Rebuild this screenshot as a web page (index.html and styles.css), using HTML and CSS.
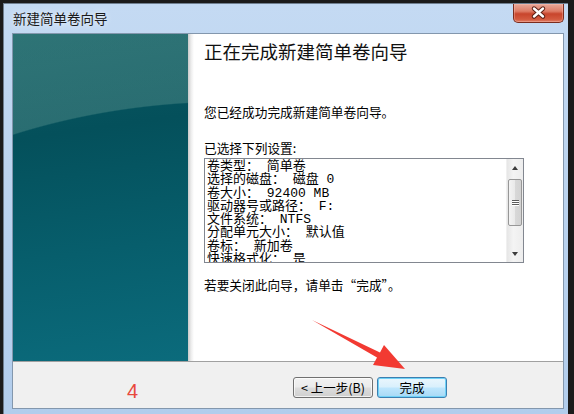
FILE: index.html
```html
<!DOCTYPE html>
<html lang="zh-CN">
<head>
    <meta charset="UTF-8">
    <title>新建简单卷向导</title>
    <link rel="stylesheet" href="styles.css">
</head>
<body>
    <div class="screen">
        <div class="window">
            <!-- Title bar -->
            <div class="titlebar">
                <span class="title">新建简单卷向导</span>
                <div class="close-btn">
                    <svg width="51" height="19" viewBox="0 0 51 19">
                        <path d="M21 5.5 L30 13.5 M30 5.5 L21 13.5" stroke="#5a1f14" stroke-width="4.4" stroke-linecap="round"/>
                        <path d="M21 5.5 L30 13.5 M30 5.5 L21 13.5" stroke="#ffffff" stroke-width="2.4" stroke-linecap="round"/>
                    </svg>
                </div>
            </div>

            <!-- Client area -->
            <div class="client">
                <div class="main">
                    <div class="banner"></div>
                    <div class="page">
                        <h1 class="headline">正在完成新建简单卷向导</h1>
                        <p class="intro">您已经成功完成新建简单卷向导。</p>
                        <p class="label">已选择下列设置:</p>

                        <div class="listbox">
                            <div class="list-text">
                                <div>卷类型： 简单卷</div>
                                <div>选择的磁盘： 磁盘 0</div>
                                <div>卷大小： 92400 MB</div>
                                <div>驱动器号或路径： F:</div>
                                <div>文件系统： NTFS</div>
                                <div>分配单元大小： 默认值</div>
                                <div>卷标： 新加卷</div>
                                <div>快速格式化： 是</div>
                            </div>
                            <div class="scrollbar">
                                <div class="sb-btn"><span class="tri-up"></span></div>
                                <div class="sb-track">
                                    <div class="sb-thumb">
                                        <span class="grip"></span>
                                        <span class="grip"></span>
                                        <span class="grip"></span>
                                    </div>
                                </div>
                                <div class="sb-btn"><span class="tri-down"></span></div>
                            </div>
                        </div>

                        <p class="hint">若要关闭此向导，请单击“完成”。</p>
                    </div>
                </div>

                <!-- Footer buttons -->
                <div class="footer">
                    <span class="step">4</span>
                    <div class="buttons">
                        <button class="btn back">&lt; 上一步(B)</button>
                        <button class="btn finish">完成</button>
                    </div>
                </div>
            </div>
        </div>

        <!-- Red annotation arrow -->
        <svg class="annotation" width="574" height="414" viewBox="0 0 574 414">
            <polygon points="312,320 380,352.6 384,345 405,369 373,365 377,357.6" fill="#f23a32"/>
        </svg>
    </div>
</body>
</html>
```

FILE: styles.css
```css
* {
    margin: 0;
    padding: 0;
    box-sizing: border-box;
}

body {
    background: #1b1b1b;
    font-family: "Noto Sans CJK SC", "Liberation Sans", sans-serif;
    color: #000;
}

.screen {
    position: relative;
    width: 574px;
    height: 414px;
    overflow: hidden;
    padding: 3px 6px 0 3px;
    background: #1b1b1b;
}

/* Window frame */
.window {
    height: 411px;
    display: flex;
    flex-direction: column;
    padding: 0 4px 5px 8px;
    background: linear-gradient(to bottom, #c4daf3 0%, #bcd4ef 40%, #b2cdec 100%);
    border-left: 1px solid #6f7f90;
    border-top: 1px solid #6f7f90;
}

.titlebar {
    height: 29px;
    display: flex;
    justify-content: space-between;
    align-items: flex-start;
}

.title {
    margin-top: 5px;
    margin-left: 1px;
    font-size: 13.5px;
    line-height: 18px;
    color: #1a1a1a;
    text-shadow: 0 0 6px rgba(255, 255, 255, 0.9);
}

.close-btn {
    width: 51px;
    height: 19px;
    border: 1px solid #7a2c1e;
    border-top: none;
    border-radius: 0 0 5px 5px;
    background: linear-gradient(to bottom, #eaa898 0%, #de7c66 40%, #c8452c 55%, #d35a3f 85%, #e0816a 100%);
    box-shadow: inset 0 0 0 1px rgba(255, 200, 190, 0.35);
}

.close-btn svg {
    display: block;
    margin: -1px 0 0 -1px;
}

/* Client area */
.client {
    flex: 1;
    display: flex;
    flex-direction: column;
    border: 1px solid #8397ad;
    background: #f0f0f0;
}

.main {
    height: 327px;
    display: flex;
}

.banner {
    width: 175px;
    background:
        radial-gradient(ellipse 492px 313px at 220px 380px, transparent 99.6%, rgba(120, 170, 160, 0.32) 100%),
        linear-gradient(172deg, #0b5a62 0%, #04505b 30%, #075e6c 65%, #0b6b7c 100%);
}

.page {
    flex: 1;
    padding: 5px 0 0 16px;
    background: linear-gradient(to right, #c9c9c9 0, #ececec 3px, #ffffff 6px);
}

.headline {
    font-size: 18.5px;
    font-weight: 400;
    line-height: 24px;
    color: #111;
}

.intro {
    margin-top: 41px;
    font-size: 12.7px;
    line-height: 16px;
}

.label {
    margin-top: 20px;
    font-size: 12.7px;
    line-height: 16px;
}

/* Settings list */
.listbox {
    margin-top: 2px;
    width: 320px;
    height: 105px;
    display: flex;
    border: 1px solid #828790;
    background: #fff;
}

.list-text {
    flex: 1;
    overflow: hidden;
    padding: 1px 0 0 2px;
    font-family: "Liberation Mono", "Noto Sans CJK SC", monospace;
    font-size: 13px;
    line-height: 13.3px;
    white-space: nowrap;
}

.scrollbar {
    width: 17px;
    display: flex;
    flex-direction: column;
    background: linear-gradient(to right, #e6e6e6, #f4f4f4 40%, #ededed);
    border-left: 1px solid #f0f0f0;
}

.sb-btn {
    height: 17px;
    display: flex;
    align-items: center;
    justify-content: center;
}

.tri-up {
    width: 0;
    height: 0;
    border-left: 3.5px solid transparent;
    border-right: 3.5px solid transparent;
    border-bottom: 4px solid #3c3c3c;
}

.tri-down {
    width: 0;
    height: 0;
    border-left: 3.5px solid transparent;
    border-right: 3.5px solid transparent;
    border-top: 4px solid #3c3c3c;
}

.sb-track {
    flex: 1;
    padding-top: 3px;
}

.sb-thumb {
    height: 47px;
    margin: 0 1px;
    border: 1px solid #979797;
    border-radius: 2px;
    background: linear-gradient(to right, #f3f3f3, #e9e9e9 50%, #d8d8d8 51%, #d2d2d2);
    display: flex;
    flex-direction: column;
    align-items: center;
    justify-content: center;
    gap: 1px;
}

.grip {
    width: 7px;
    height: 1px;
    background: #5b5b5b;
    box-shadow: 0 1px 0 #ffffff;
}

.hint {
    margin-top: 14px;
    font-size: 12.7px;
    line-height: 16px;
}

/* Footer */
.footer {
    flex: 1;
    display: flex;
    align-items: flex-start;
    border-top: 1px solid #a0a0a0;
    background: #f0f0f0;
}

.step {
    margin: 18px 0 0 114px;
    font-family: "Liberation Sans", sans-serif;
    font-size: 20px;
    line-height: 22px;
    color: #e8483c;
}

.buttons {
    margin: 15px 116px 0 auto;
    display: flex;
    gap: 4px;
}

.btn {
    height: 21px;
    font-family: "Noto Sans CJK SC", sans-serif;
    font-size: 12.5px;
    line-height: 18px;
    color: #000;
    border: 1px solid #707070;
    border-radius: 3px;
    background: linear-gradient(to bottom, #f2f2f2 0%, #ebebeb 48%, #dddddd 52%, #cfcfcf 100%);
    box-shadow: inset 0 0 0 1px rgba(255, 255, 255, 0.7);
}

.back {
    width: 80px;
}

.finish {
    width: 70px;
    border-color: #3c7fb1;
    background: linear-gradient(to bottom, #eaf6fd 0%, #d9f0fc 48%, #bee6fd 52%, #a7d9f5 100%);
    box-shadow: inset 0 0 0 1px #6fd2f7;
}

/* Annotation overlay */
.annotation {
    position: absolute;
    top: 0;
    left: 0;
    pointer-events: none;
}
```
